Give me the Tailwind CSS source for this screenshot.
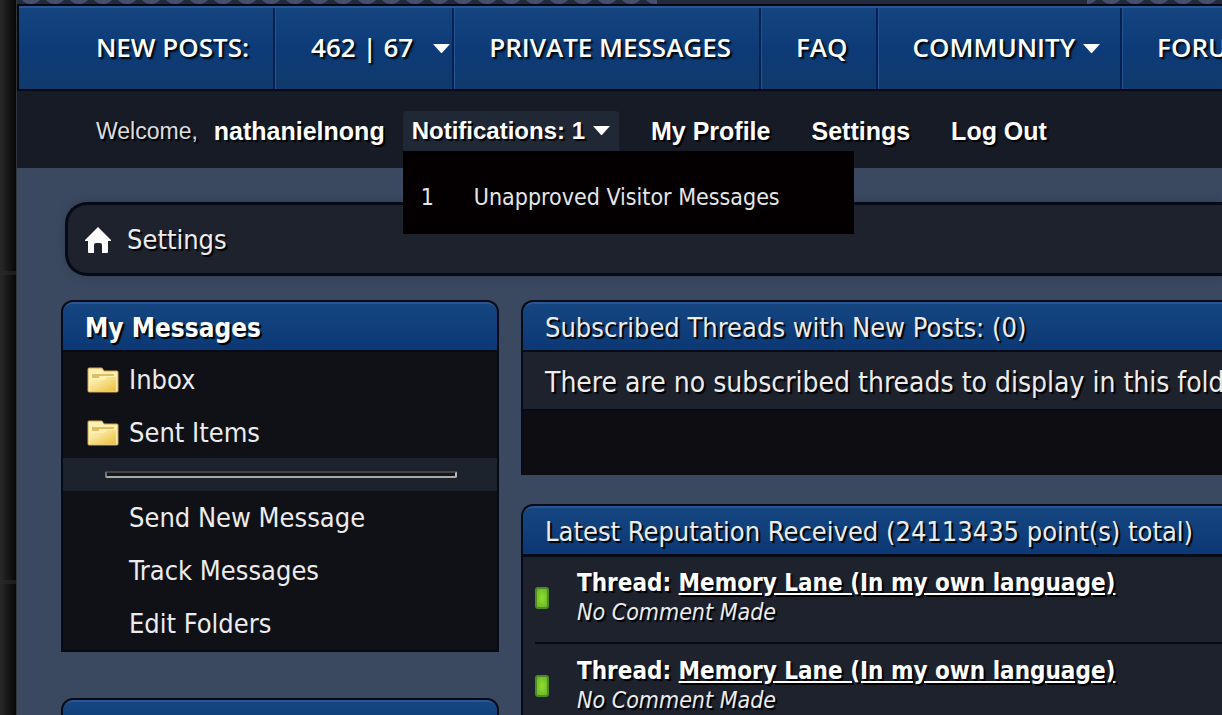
<!DOCTYPE html>
<html lang="en">
<head>
<meta charset="utf-8">
<title>Settings</title>
<script src="https://cdn.jsdelivr.net/npm/@tailwindcss/browser@4"></script>
</head>
<body class="flex h-screen overflow-hidden bg-[#1b1b1b] font-['DejaVu_Sans_Condensed','DejaVu_Sans',sans-serif] text-[27px] leading-8 text-[#ececec]">
<svg class="absolute h-0 w-0" aria-hidden="true"><defs>
  <linearGradient id="gold" x1="0" y1="0" x2="1" y2="1"><stop offset="0" stop-color="#fff6c8"/><stop offset="1" stop-color="#ecc23c"/></linearGradient>
  <g id="folder"><path d="M1 2q0-1 1-1h13l2 3h13q1 0 1 1v19q0 1-1 1H2q-1 0-1-1z" fill="#fdf0b4" stroke="#d3a247"/><path d="M3 13h14l3-3h9v14H3z" fill="url(#gold)"/><path d="M5 8h9l2 0h11" stroke="#dfbd62" stroke-width="2" fill="none"/><path d="M5 10h7" stroke="#dfbd62" stroke-width="2"/></g>
</defs></svg>
<div class="w-[17px] shrink-0 border-r border-[#33363c] bg-linear-to-r from-[#262626] from-10% to-[#070707]">
  <div class="h-[275px] border-b-4 border-[#2a2a2a]/60"></div>
  <div class="h-[309px] border-b-4 border-[#2a2a2a]/60"></div>
</div>
<div class="flex min-w-0 flex-1 flex-col overflow-hidden bg-[#3b4960]">
  <svg class="block h-1 w-full shrink-0 bg-[#232a3c]" aria-hidden="true">
    <defs><pattern id="dots" width="24" height="8" patternUnits="userSpaceOnUse"><circle cx="14" cy="-8" r="12" fill="#47506c"/></pattern></defs>
    <rect width="640" height="4" fill="url(#dots)"/>
    <rect x="1070" width="200" height="4" fill="url(#dots)"/>
  </svg>
  <nav class="shrink-0 border-y-2 border-l-2 border-[#020814] bg-linear-to-b from-[#154680] via-[#0d3b79] to-[#103a6b]">
    <ul class="flex h-[83px] w-max items-stretch border-t-2 border-[#2a5597] font-['Open_Sans',sans-serif] text-[26px] font-semibold text-white [text-shadow:2px_2px_2px_#000]">
      <li class="flex border-r-2 border-[#04204f]"><a href="#" class="flex items-center pr-6 pb-1 pl-[77px]">NEW POSTS:</a></li>
      <li class="flex border-r-2 border-l border-r-[#04204f] border-l-[#245493]"><a href="#" class="flex items-center gap-5 pr-0.5 pb-1 pl-[35px]">462 | 67 <svg class="mt-1 w-[17px]" viewBox="0 0 18 10" fill="#fff"><path d="M0 0h18L9 10z"/></svg></a></li>
      <li class="flex border-r-2 border-l border-r-[#04204f] border-l-[#245493]"><a href="#" class="flex items-center pr-7 pb-1 pl-[34px]">PRIVATE MESSAGES</a></li>
      <li class="flex border-r-2 border-l border-r-[#04204f] border-l-[#245493]"><a href="#" class="flex items-center pr-7 pb-1 pl-[34px]">FAQ</a></li>
      <li class="flex border-r-2 border-l border-r-[#04204f] border-l-[#245493]"><a href="#" class="flex items-center gap-2 pr-5 pb-1 pl-[34px]">COMMUNITY <svg class="mt-1 w-[17px]" viewBox="0 0 18 10" fill="#fff"><path d="M0 0h18L9 10z"/></svg></a></li>
      <li class="flex border-l border-[#245493]"><a href="#" class="flex items-center pr-7 pb-1 pl-[34px]">FORUM</a></li>
    </ul>
  </nav>
  <div class="flex h-[77px] shrink-0 items-center bg-[#161b25] pt-0.5 pl-[79px] font-['Liberation_Sans',sans-serif] text-[25px] font-bold text-white [text-shadow:2px_2px_1px_#000]">
    <span class="mr-4 text-[23px] font-normal text-[#dcdcdc]">Welcome,</span>
    <a href="#" class="mr-[18px]">nathanielnong</a>
    <div class="relative mr-8">
      <button class="flex h-10 items-center gap-2 rounded-t bg-[#212835] px-[9px] text-2xl font-bold [text-shadow:2px_2px_1px_#000]">Notifications: 1 <svg class="w-[17px]" viewBox="0 0 18 10" fill="#fff"><path d="M0 0h18L9 10z"/></svg></button>
      <a href="#" class="absolute top-full left-0 z-10 flex h-[83px] w-[451px] items-center gap-10 bg-[#040002] px-[18px] pt-2.5 font-['DejaVu_Sans_Condensed','DejaVu_Sans',sans-serif] text-[23px] font-normal text-[#e6e6e6]"><span>1</span><span>Unapproved Visitor Messages</span></a>
    </div>
    <a href="#" class="mr-[41px]">My Profile</a>
    <a href="#" class="mr-[41px]">Settings</a>
    <a href="#">Log Out</a>
  </div>
  <div class="mt-[34px] ml-12 flex h-[74px] shrink-0 items-center gap-4 rounded-l-[22px] border-y-3 border-l-3 border-[#050b16] bg-[#1d222d] pt-0.5 pl-[17px] shadow-[0_0_8px_#20252f66]">
    <svg class="w-[26px]" viewBox="0 0 26 26" fill="#fff"><path d="M13 0 26 13v1h-3v11q0 1-1 1h-5v-8q0-2-2-2h-4q-2 0-2 2v8H4q-1 0-1-1V14H0v-1z"/></svg>
    <a href="#" class="[text-shadow:2px_2px_1px_#000]">Settings</a>
  </div>
  <div class="mt-6 ml-11 flex gap-[22px]">
    <aside class="flex w-[438px] shrink-0 flex-col gap-[46px]">
      <section class="rounded-t-xl border-2 border-[#050b16] bg-[#101117]">
        <h2 class="flex h-[50px] items-center rounded-t-[10px] border-t-2 border-b-2 border-t-[#2a5597] border-b-[#050b16] bg-linear-to-b from-[#154680] to-[#0c3876] pt-0.5 pl-[22px] text-[26px] font-bold text-white [text-shadow:2px_2px_1px_#000]">My Messages</h2>
        <ul>
          <li class="flex h-[53px] items-center gap-[10px] pt-0.5 pl-6"><svg class="w-8" viewBox="0 0 32 26"><use href="#folder"/></svg><a href="#">Inbox</a></li>
          <li class="flex h-[53px] items-center gap-[10px] pt-0.5 pl-6"><svg class="w-8" viewBox="0 0 32 26"><use href="#folder"/></svg><a href="#">Sent Items</a></li>
        </ul>
        <div class="flex h-[33px] items-center bg-[#1d232d] pr-10 pl-[42px]"><hr class="h-[7px] w-full rounded-xs border-2 border-t-[#444] border-r-[#bbb] border-b-[#aaa] border-l-[#777] bg-[#14161b]"></div>
        <ul class="pl-[66px]">
          <li class="flex h-[53px] items-center"><a href="#">Send New Message</a></li>
          <li class="flex h-[53px] items-center"><a href="#">Track Messages</a></li>
          <li class="flex h-[53px] items-center"><a href="#">Edit Folders</a></li>
        </ul>
      </section>
      <section class="rounded-t-xl border-2 border-[#050b16] bg-[#101117]">
        <h2 class="flex h-[50px] items-center rounded-t-[10px] border-t-2 border-b-2 border-t-[#2a5597] border-b-[#050b16] bg-linear-to-b from-[#154680] to-[#0c3876] pt-0.5 pl-[22px] text-[26px] font-bold text-white [text-shadow:2px_2px_1px_#000]">My Profile Settings</h2>
      </section>
    </aside>
    <main class="flex min-w-0 flex-1 flex-col gap-[29px] whitespace-nowrap [text-shadow:2px_2px_1px_#000]">
      <section class="rounded-tl-xl border-t-2 border-l-2 border-[#050b16] bg-[#0d0d12]">
        <h2 class="flex h-[50px] items-center rounded-tl-[10px] border-t-2 border-b-2 border-t-[#2a5597] border-b-[#050b16] bg-linear-to-b from-[#154680] to-[#0c3876] pt-0.5 pl-[22px]">Subscribed Threads with New Posts: (0)</h2>
        <p class="flex h-[59px] items-center overflow-hidden border-b-2 border-[#050b16] bg-[#1d222d] pt-1 pl-[22px] text-[28px]">There are no subscribed threads to display in this folder.</p>
        <div class="h-16"></div>
      </section>
      <section class="rounded-tl-xl border-t-2 border-l-2 border-[#050b16] bg-[#1d222d]">
        <h2 class="flex h-[51px] items-center rounded-tl-[10px] border-t-2 border-b-3 border-t-[#2a5597] border-b-[#050b16] bg-linear-to-b from-[#154680] to-[#0c3876] pt-0.5 pl-[22px]">Latest Reputation Received (24113435 point(s) total)</h2>
        <ul class="ml-3">
          <li class="flex h-[87px] items-center gap-7 border-b-2 border-[#050b16] pb-1 text-[23px] leading-[29px]">
            <span class="h-[22px] w-[14px] rounded-[3px] border-2 border-[#4f8a25] bg-radial from-[#8fe02c] to-[#69b22b]"></span>
            <div><p class="text-2xl/[29px] font-bold text-white">Thread: <a href="#" class="underline">Memory Lane (In my own language)</a></p><p class="italic">No Comment Made</p></div>
          </li>
          <li class="flex h-[90px] items-center gap-7 border-b-2 border-[#050b16] pb-1 text-[23px] leading-[29px]">
            <span class="h-[22px] w-[14px] rounded-[3px] border-2 border-[#4f8a25] bg-radial from-[#8fe02c] to-[#69b22b]"></span>
            <div><p class="text-2xl/[29px] font-bold text-white">Thread: <a href="#" class="underline">Memory Lane (In my own language)</a></p><p class="italic">No Comment Made</p></div>
          </li>
        </ul>
      </section>
    </main>
  </div>
</div>
</body>
</html>
